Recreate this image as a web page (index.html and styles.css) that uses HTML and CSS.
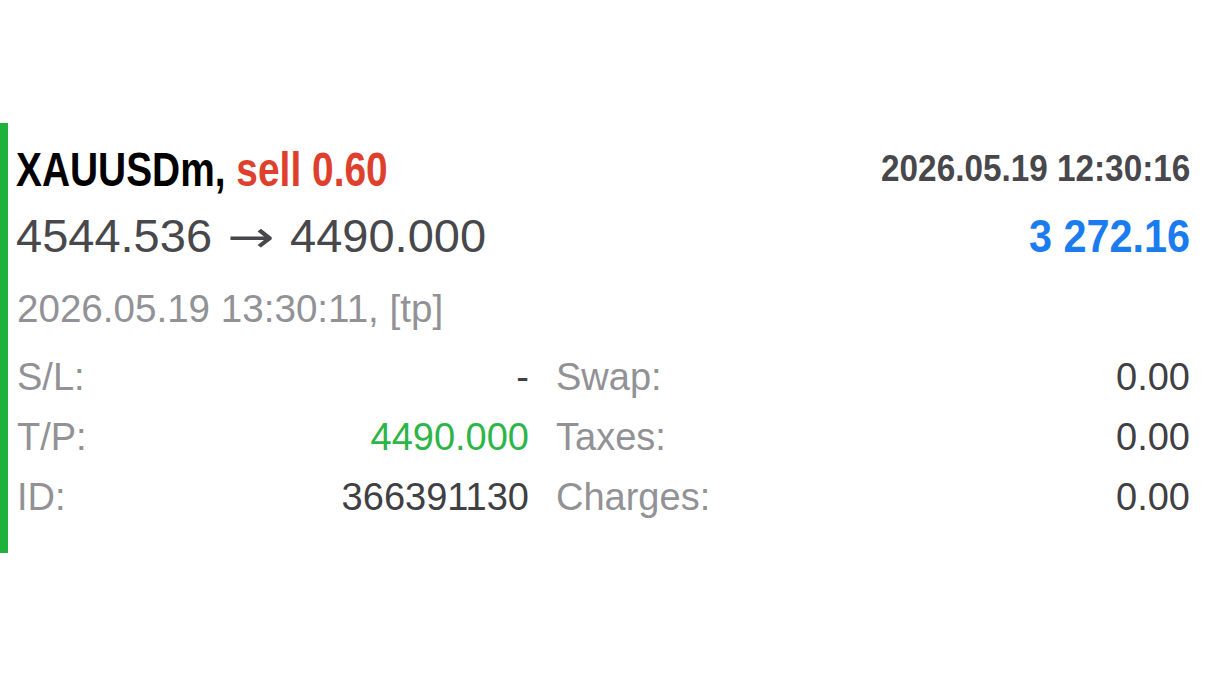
FILE: index.html
```html
<!DOCTYPE html>
<html>
<head>
<meta charset="utf-8">
<link rel="stylesheet" href="styles.css">
</head>
<body>
<div class="page">
  <div class="deal">
    <div class="row head">
      <div class="title"><span class="sym">XAUUSDm,</span> <span class="side">sell 0.60</span></div>
      <div class="open-time">2026.05.19 12:30:16</div>
    </div>
    <div class="row prices">
      <div class="price">4544.536<span class="arrow">→</span>4490.000</div>
      <div class="profit">3 272.16</div>
    </div>
    <div class="close-time">2026.05.19 13:30:11, [tp]</div>
    <div class="details">
      <div class="cell"><span class="lbl">S/L:</span><span class="val">-</span></div>
      <div class="cell"><span class="lbl">Swap:</span><span class="val">0.00</span></div>
      <div class="cell"><span class="lbl">T/P:</span><span class="val tp">4490.000</span></div>
      <div class="cell"><span class="lbl">Taxes:</span><span class="val">0.00</span></div>
      <div class="cell"><span class="lbl">ID:</span><span class="val">366391130</span></div>
      <div class="cell"><span class="lbl">Charges:</span><span class="val">0.00</span></div>
    </div>
  </div>
</div>
```
FILE: styles.css
```css
html, body {
  margin: 0;
  padding: 0;
  background: #ffffff;
}
body {
  font-family: "Liberation Sans", Arial, sans-serif;
  width: 1206px;
  height: 678px;
  overflow: hidden;
}
.page {
  padding-top: 123px;
}
.deal {
  border-left: 8px solid #1fb23a;
  padding: 19px 16px 26px 9px;
}
.row {
  display: flex;
  justify-content: space-between;
}
.head {
  align-items: flex-start;
}
.title {
  font-weight: 700;
  font-size: 48px;
  line-height: 56px;
  white-space: nowrap;
  transform: scaleX(0.81);
  transform-origin: left center;
  margin-left: -1px;
}
.sym { color: #000000; }
.side { color: #df3f2d; }
.open-time {
  font-weight: 700;
  font-size: 36px;
  line-height: 53px;
  color: #48484c;
  white-space: nowrap;
  transform: scaleX(0.925);
  transform-origin: right center;
}
.prices {
  align-items: baseline;
  margin-top: 8px;
}
.price {
  font-size: 47px;
  line-height: 60px;
  color: #48484c;
  white-space: nowrap;
  margin-left: -1px;
}
.arrow {
  display: inline-block;
  font-family: "DejaVu Sans", sans-serif;
  font-size: 44px;
  width: 47px;
  margin: 0 16px 0 15px;
  transform: scaleX(1.28);
  transform-origin: left center;
}
.profit {
  font-weight: 700;
  font-size: 46px;
  line-height: 60px;
  color: #1b7cef;
  white-space: nowrap;
  transform: scaleX(0.9);
  transform-origin: right center;
}
.close-time {
  margin-top: 17px;
  font-size: 38.6px;
  line-height: 50px;
  color: #929296;
}
.details {
  margin-top: 13px;
  display: grid;
  grid-template-columns: 512px 634px;
  column-gap: 27px;
}
.cell {
  display: flex;
  justify-content: space-between;
  font-size: 38px;
  line-height: 60px;
}
.lbl { color: #929296; }
.val { color: #404044; }
.val.tp { color: #2db548; }
```
